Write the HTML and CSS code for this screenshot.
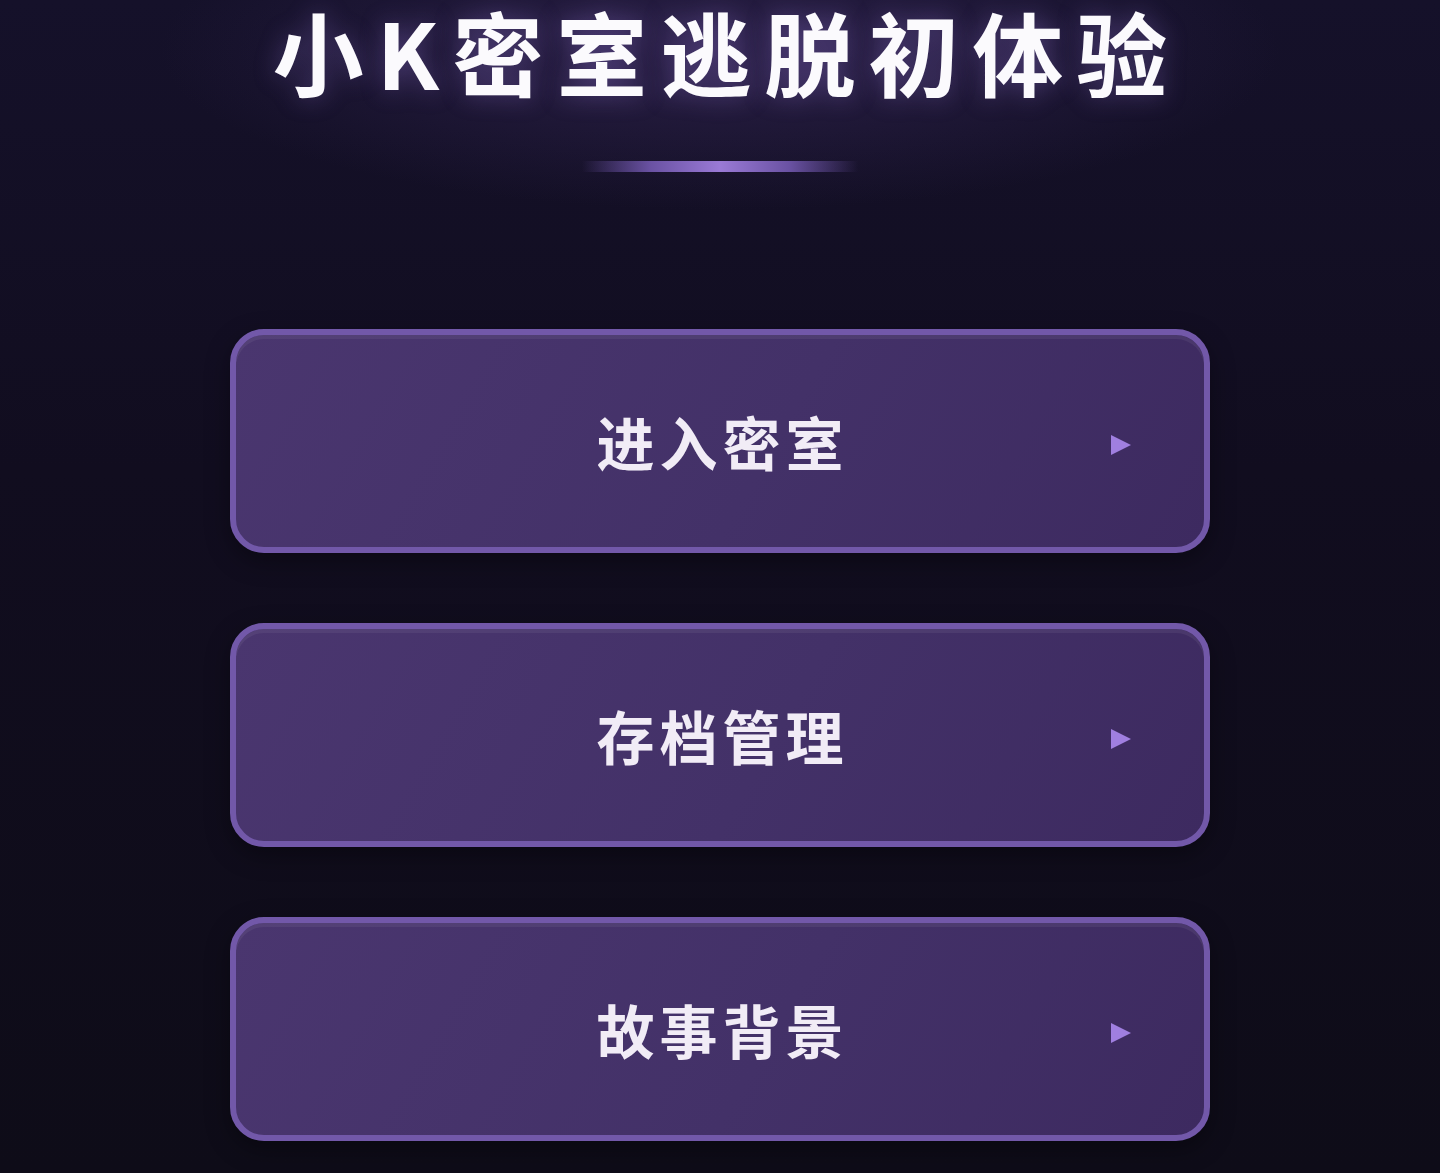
FILE: index.html
```html
<!DOCTYPE html>
<html lang="zh-CN">
<head>
  <meta charset="UTF-8" />
  <meta name="viewport" content="width=device-width, initial-scale=1.0"/>
  <title>小K密室逃脱初体验</title>
  <link rel="stylesheet" href="styles.css">
</head>
<body>

  <div class="header">
    <h1 class="title">小K密室逃脱初体验</h1>
    <div class="divider"></div>
  </div>

  <div class="menu">
    <button class="menu-btn" type="button">
      <span class="label">进入密室</span>
      <span class="arrow"></span>
    </button>
    <button class="menu-btn" type="button">
      <span class="label">存档管理</span>
      <span class="arrow"></span>
    </button>
    <button class="menu-btn" type="button">
      <span class="label">故事背景</span>
      <span class="arrow"></span>
    </button>
  </div>

</body>
</html>
```

FILE: styles.css
```css
html, body {
  margin: 0;
  height: 100%;
}
body {
  font-family: "Noto Sans CJK SC", "Noto Sans", sans-serif;
  background:
    radial-gradient(ellipse 560px 160px at 50% 50px, rgba(60, 44, 96, 0.55), transparent),
    linear-gradient(180deg, #15112a 0%, #110d1f 40%, #0e0c18 100%);
  display: flex;
  flex-direction: column;
  align-items: center;
  overflow: hidden;
}
.header {
  display: flex;
  flex-direction: column;
  align-items: center;
}
.title {
  margin: 0;
  font-size: 91px;
  line-height: 100px;
  font-weight: 700;
  letter-spacing: 13px;
  padding-left: 13px;
  color: #fbfafd;
  text-shadow: 0 0 24px rgba(160, 130, 230, 0.35);
}
.divider {
  margin-top: 61px;
  width: 276px;
  height: 11px;
  background: linear-gradient(90deg, rgba(120, 90, 190, 0) 0%, #6a52a3 25%, #9a7ad6 50%, #6a52a3 75%, rgba(120, 90, 190, 0) 100%);
}
.menu {
  margin-top: 157px;
  display: flex;
  flex-direction: column;
  gap: 70px;
}
.menu-btn {
  position: relative;
  box-sizing: border-box;
  width: 980px;
  height: 224px;
  border: 6px solid #7258a9;
  border-radius: 34px;
  background: linear-gradient(120deg, #4a366f 0%, #433168 55%, #3d2a60 100%);
  box-shadow: inset 0 4px 0 rgba(255, 255, 255, 0.06), 0 8px 24px rgba(0, 0, 0, 0.35);
  display: flex;
  align-items: center;
  justify-content: center;
  cursor: pointer;
  font-family: inherit;
}
.label {
  font-size: 58px;
  font-weight: 700;
  color: #f1ecf6;
  letter-spacing: 5px;
  padding-left: 5px;
}
.arrow {
  position: absolute;
  right: 73px;
  top: 50%;
  margin-top: -6px;
  width: 0;
  height: 0;
  border-top: 10px solid transparent;
  border-bottom: 10px solid transparent;
  border-left: 20px solid #a07fe0;
}
```
